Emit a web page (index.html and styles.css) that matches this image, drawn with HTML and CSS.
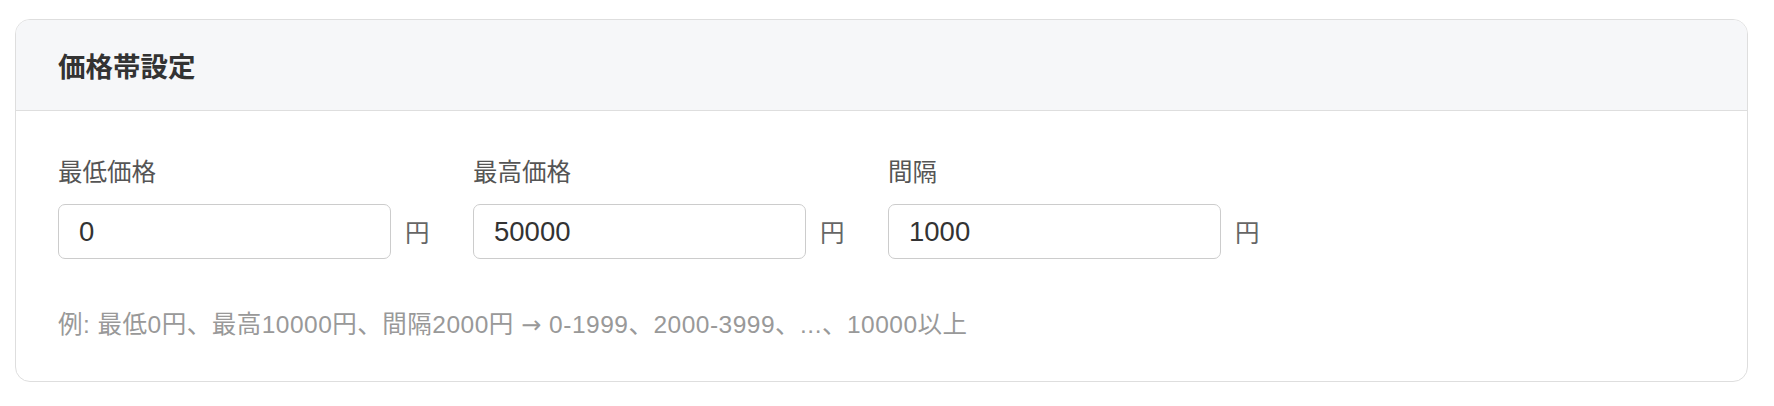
FILE: index.html
```html
<!DOCTYPE html>
<html lang="ja">
<head>
<meta charset="utf-8">
<link rel="stylesheet" href="styles.css">
</head>
<body>
<section class="card">
  <header class="card-header">
    <h2 class="card-title">価格帯設定</h2>
  </header>
  <div class="card-body">
    <div class="fields">
      <div class="field">
        <label class="field-label">最低価格</label>
        <div class="input-row">
          <input class="text-input" type="text" value="0">
          <span class="unit">円</span>
        </div>
      </div>
      <div class="field">
        <label class="field-label">最高価格</label>
        <div class="input-row">
          <input class="text-input" type="text" value="50000">
          <span class="unit">円</span>
        </div>
      </div>
      <div class="field">
        <label class="field-label">間隔</label>
        <div class="input-row">
          <input class="text-input" type="text" value="1000">
          <span class="unit">円</span>
        </div>
      </div>
    </div>
    <p class="hint">例: 最低0円、最高10000円、間隔2000円 <span class="arrow">→</span> 0-1999、2000-3999、...、10000以上</p>
  </div>
</section>
</body>
</html>
```

FILE: styles.css
```css
html, body {
  margin: 0;
  padding: 0;
  background: #ffffff;
}

body {
  font-family: "Liberation Sans", "Noto Sans CJK JP", sans-serif;
  color: #333333;
  text-spacing-trim: space-all;
}

.card {
  margin: 19px 26px 0 15px;
  border: 1.5px solid #dedede;
  border-radius: 15px;
  overflow: hidden;
  background: #ffffff;
}

.card-header {
  background: #f6f7f9;
  border-bottom: 1.5px solid #dedede;
  height: 90px;
  display: flex;
  align-items: center;
  padding: 0 42px;
}

.card-title {
  margin: 0;
  font-size: 27.5px;
  font-weight: bold;
  color: #333333;
}

.card-body {
  padding: 43px 42px 37px;
}

.fields {
  display: flex;
  gap: 43.5px;
}

.field {
  display: flex;
  flex-direction: column;
}

.field-label {
  font-size: 24.5px;
  line-height: 37px;
  color: #555555;
  margin-bottom: 13px;
}

.input-row {
  display: flex;
  align-items: center;
  gap: 14px;
}

.text-input {
  box-sizing: border-box;
  width: 333px;
  height: 55px;
  border: 1.5px solid #cccccc;
  border-radius: 7px;
  padding: 0 20px;
  font-family: "Liberation Sans", "Noto Sans CJK JP", sans-serif;
  font-size: 27.5px;
  color: #333333;
  background: #ffffff;
  outline: none;
}

.unit {
  font-size: 24.5px;
  color: #666666;
}

.hint {
  margin: 47px 0 0;
  font-size: 24.5px;
  line-height: 37px;
  letter-spacing: 0.5px;
  color: #999999;
}

.arrow {
  font-family: "DejaVu Sans", sans-serif;
  font-size: 24px;
}
```
